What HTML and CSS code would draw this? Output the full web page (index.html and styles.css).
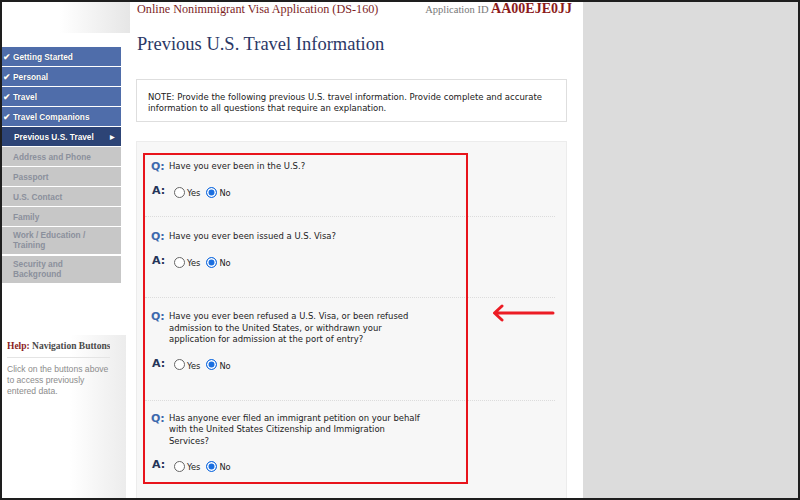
FILE: index.html
```html
<!DOCTYPE html>
<html lang="en">
<head>
    <meta charset="UTF-8">
    <title>Previous U.S. Travel Information</title>
    <link rel="stylesheet" href="styles.css">
</head>
<body>
    <div class="frame">
        <!-- Left navigation -->
        <aside class="sidebar">
            <div class="logo-area"></div>
            <ul class="nav">
                <li class="nav-item done"><span class="check">&#10004;</span>Getting Started</li>
                <li class="nav-item done"><span class="check">&#10004;</span>Personal</li>
                <li class="nav-item done"><span class="check">&#10004;</span>Travel</li>
                <li class="nav-item done"><span class="check">&#10004;</span>Travel Companions</li>
                <li class="nav-item active">Previous U.S. Travel<span class="pointer">&#9654;</span></li>
                <li class="nav-item todo">Address and Phone</li>
                <li class="nav-item todo">Passport</li>
                <li class="nav-item todo">U.S. Contact</li>
                <li class="nav-item todo">Family</li>
                <li class="nav-item todo tall">Work / Education /<br>Training</li>
                <li class="nav-item todo tall">Security and<br>Background</li>
            </ul>
            <div class="help-box">
                <div class="help-title"><span class="help-word">Help:</span> Navigation Buttons</div>
                <p>Click on the buttons above to access previously entered data.</p>
            </div>
        </aside>

        <!-- Main form -->
        <main class="main">
            <div class="app-header">
                <span class="app-name">Online Nonimmigrant Visa Application (DS-160)</span>
                <span class="app-id">Application ID <strong>AA00EJE0JJ</strong></span>
            </div>
            <div class="header-bar"></div>

            <h1>Previous U.S. Travel Information</h1>

            <div class="note">
                NOTE: Provide the following previous U.S. travel information. Provide complete and accurate<br>
                information to all questions that require an explanation.
            </div>

            <div class="panel">
                <div class="question first">
                    <div class="q-row"><span class="q">Q:</span><span class="q-text">Have you ever been in the U.S.?</span></div>
                    <div class="a-row"><span class="a">A:</span>
                        <label><input type="radio" class="radio" name="q1">Yes</label>
                        <label><input type="radio" class="radio" name="q1" checked>No</label>
                    </div>
                </div>
                <div class="question second">
                    <div class="q-row"><span class="q">Q:</span><span class="q-text">Have you ever been issued a U.S. Visa?</span></div>
                    <div class="a-row"><span class="a">A:</span>
                        <label><input type="radio" class="radio" name="q2">Yes</label>
                        <label><input type="radio" class="radio" name="q2" checked>No</label>
                    </div>
                </div>
                <div class="question">
                    <div class="q-row"><span class="q">Q:</span><span class="q-text">Have you ever been refused a U.S. Visa, or been refused<br>admission to the United States, or withdrawn your<br>application for admission at the port of entry?</span></div>
                    <div class="a-row"><span class="a">A:</span>
                        <label><input type="radio" class="radio" name="q3">Yes</label>
                        <label><input type="radio" class="radio" name="q3" checked>No</label>
                    </div>
                </div>
                <div class="question last">
                    <div class="q-row"><span class="q">Q:</span><span class="q-text">Has anyone ever filed an immigrant petition on your behalf<br>with the United States Citizenship and Immigration<br>Services?</span></div>
                    <div class="a-row"><span class="a">A:</span>
                        <label><input type="radio" class="radio" name="q4">Yes</label>
                        <label><input type="radio" class="radio" name="q4" checked>No</label>
                    </div>
                </div>
            </div>

            <!-- annotation -->
            <div class="highlight"></div>
            <svg class="arrow" width="66" height="20" viewBox="0 0 66 20">
                <path d="M62 10 H4 M11 3 L3.5 10 L11 17" fill="none" stroke="#ec1c24" stroke-width="3" stroke-linecap="round" stroke-linejoin="round"/>
            </svg>
        </main>

        <div class="backdrop"></div>
    </div>
</body>
</html>
```

FILE: styles.css
```css
body {
    margin: 0;
    padding: 0;
    background-color: white;
}
.frame {
    width: 800px;
    height: 500px;
    box-sizing: border-box;
    border: 2px solid #1e1e1e;
    display: flex;
    overflow: hidden;
    background-color: white;
}
/* Sidebar */
.sidebar {
    width: 128px;
    flex-shrink: 0;
    display: flex;
    flex-direction: column;
}
.logo-area {
    height: 31px;
    background: linear-gradient(to right, white 45%, #e6e6e6);
}
.nav {
    list-style: none;
    margin: 14px 0 0 0;
    padding: 0;
    width: 119px;
}
.nav-item {
    height: 19px;
    margin-bottom: 1px;
    display: flex;
    align-items: center;
    padding-left: 11px;
    font-family: 'Liberation Sans', Arial, sans-serif;
    font-weight: bold;
    font-size: 8.3px;
    color: white;
    background-color: #4f6daa;
    text-shadow: 0 0 1px rgba(0, 0, 0, 0.4);
}
.nav-item.done {
    padding-left: 1px;
}
.check {
    width: 10px;
    font-size: 8.5px;
}
.nav-item.active {
    background-color: #2d4476;
    padding-left: 12px;
    position: relative;
}
.pointer {
    position: absolute;
    right: 6px;
    font-size: 6px;
}
.nav-item.todo {
    background-color: #c7c7c7;
    color: #8b909c;
    text-shadow: none;
}
.nav-item.tall {
    height: auto;
    padding-top: 4px;
    padding-bottom: 4px;
    line-height: 9.5px;
    margin-bottom: 2px;
}
/* Help box */
.help-box {
    margin-top: 50px;
    width: 124px;
    flex: 1;
    background: linear-gradient(to right, white 55%, #ececec);
    padding: 6px 0 0 5px;
    box-sizing: border-box;
}
.help-title {
    font-family: 'Liberation Serif', 'Times New Roman', serif;
    font-weight: bold;
    font-size: 9.5px;
    color: #4a4a4a;
    white-space: nowrap;
    overflow: hidden;
    width: 103px;
    padding-bottom: 6px;
    border-bottom: 1px solid #e4e4e4;
}
.help-word {
    color: #8b1e1e;
}
.help-box p {
    margin: 6px 0 0 0;
    width: 104px;
    font-family: 'Liberation Sans', Arial, sans-serif;
    font-size: 8.6px;
    line-height: 11px;
    color: #8c8c8c;
}
/* Main */
.main {
    width: 432px;
    margin-left: 5px;
    flex-shrink: 0;
    position: relative;
    display: flex;
    flex-direction: column;
}
.app-header {
    display: flex;
    justify-content: space-between;
    align-items: baseline;
    height: 13px;
    line-height: 13px;
    font-family: 'Liberation Serif', 'Times New Roman', serif;
    padding: 0 0 0 2px;
    margin-right: -5px;
}
.app-name {
    font-size: 12.2px;
    color: #7e1f1f;
}
.app-id {
    font-size: 10.5px;
    color: #777;
}
.app-id strong {
    font-size: 14px;
    color: #8b1a1a;
}
.header-bar {
    height: 7px;
    margin-right: 4px;
    background: linear-gradient(to bottom, #ececec, white);
}
h1 {
    margin: 18px 0 0 2px;
    font-family: 'Liberation Serif', 'Times New Roman', serif;
    font-weight: normal;
    font-size: 18.5px;
    line-height: 22px;
    color: #2b3866;
}
.note {
    margin: 24px 0 0 1px;
    padding: 12px 12px 7px 11px;
    border: 1px solid #dedede;
    font-family: 'DejaVu Sans', Verdana, sans-serif;
    font-size: 8.5px;
    line-height: 11px;
    color: #222;
}
.panel {
    margin: 19px 0 0 1px;
    flex: 1;
    background-color: #f7f7f7;
    border: 1px solid #ececec;
    padding: 4px 11px 0 8px;
}
.question {
    padding: 13px 0 28px 0;
    border-bottom: 1px dotted #dcdcdc;
}
.question.first {
    padding-top: 15px;
    padding-bottom: 17px;
}
.question.second {
    padding-top: 14px;
}
.question.last {
    padding-top: 12px;
    border-bottom: none;
}
.q-row {
    display: flex;
    align-items: flex-start;
}
.q {
    width: 18px;
    padding-left: 6px;
    font-family: 'DejaVu Sans', Verdana, sans-serif;
    font-weight: bold;
    font-size: 11px;
    line-height: 12px;
    color: #3d69ad;
}
.q-text {
    font-family: 'DejaVu Sans', Verdana, sans-serif;
    font-size: 8.45px;
    line-height: 11.5px;
    color: #222;
}
.a-row {
    display: flex;
    align-items: center;
    margin-top: 12px;
    height: 14px;
}
.a {
    width: 22px;
    padding-left: 7px;
    font-family: 'DejaVu Sans', Verdana, sans-serif;
    font-weight: bold;
    font-size: 11px;
    color: #243458;
    align-self: flex-start;
    line-height: 11px;
}
.a-row label {
    display: flex;
    align-items: center;
    margin-right: 6px;
    font-family: 'DejaVu Sans', Verdana, sans-serif;
    font-size: 8.3px;
    color: #222;
    padding-top: 2px;
}
.radio {
    appearance: none;
    -webkit-appearance: none;
    width: 11px;
    height: 11px;
    margin: 0 2px 2px 0;
    border: 1px solid #666;
    border-radius: 50%;
    background-color: white;
}
.radio:checked {
    border-color: #1a6fe0;
    background-color: #1a6fe0;
    box-shadow: inset 0 0 0 1.5px white;
}
/* Annotation */
.highlight {
    position: absolute;
    left: 8px;
    top: 151px;
    width: 325px;
    height: 331px;
    box-sizing: border-box;
    border: 2px solid #e8141b;
}
.arrow {
    position: absolute;
    left: 356px;
    top: 301px;
}
.backdrop {
    flex: 1;
    margin-left: 16px;
    background-color: #dcdcdc;
}
```
